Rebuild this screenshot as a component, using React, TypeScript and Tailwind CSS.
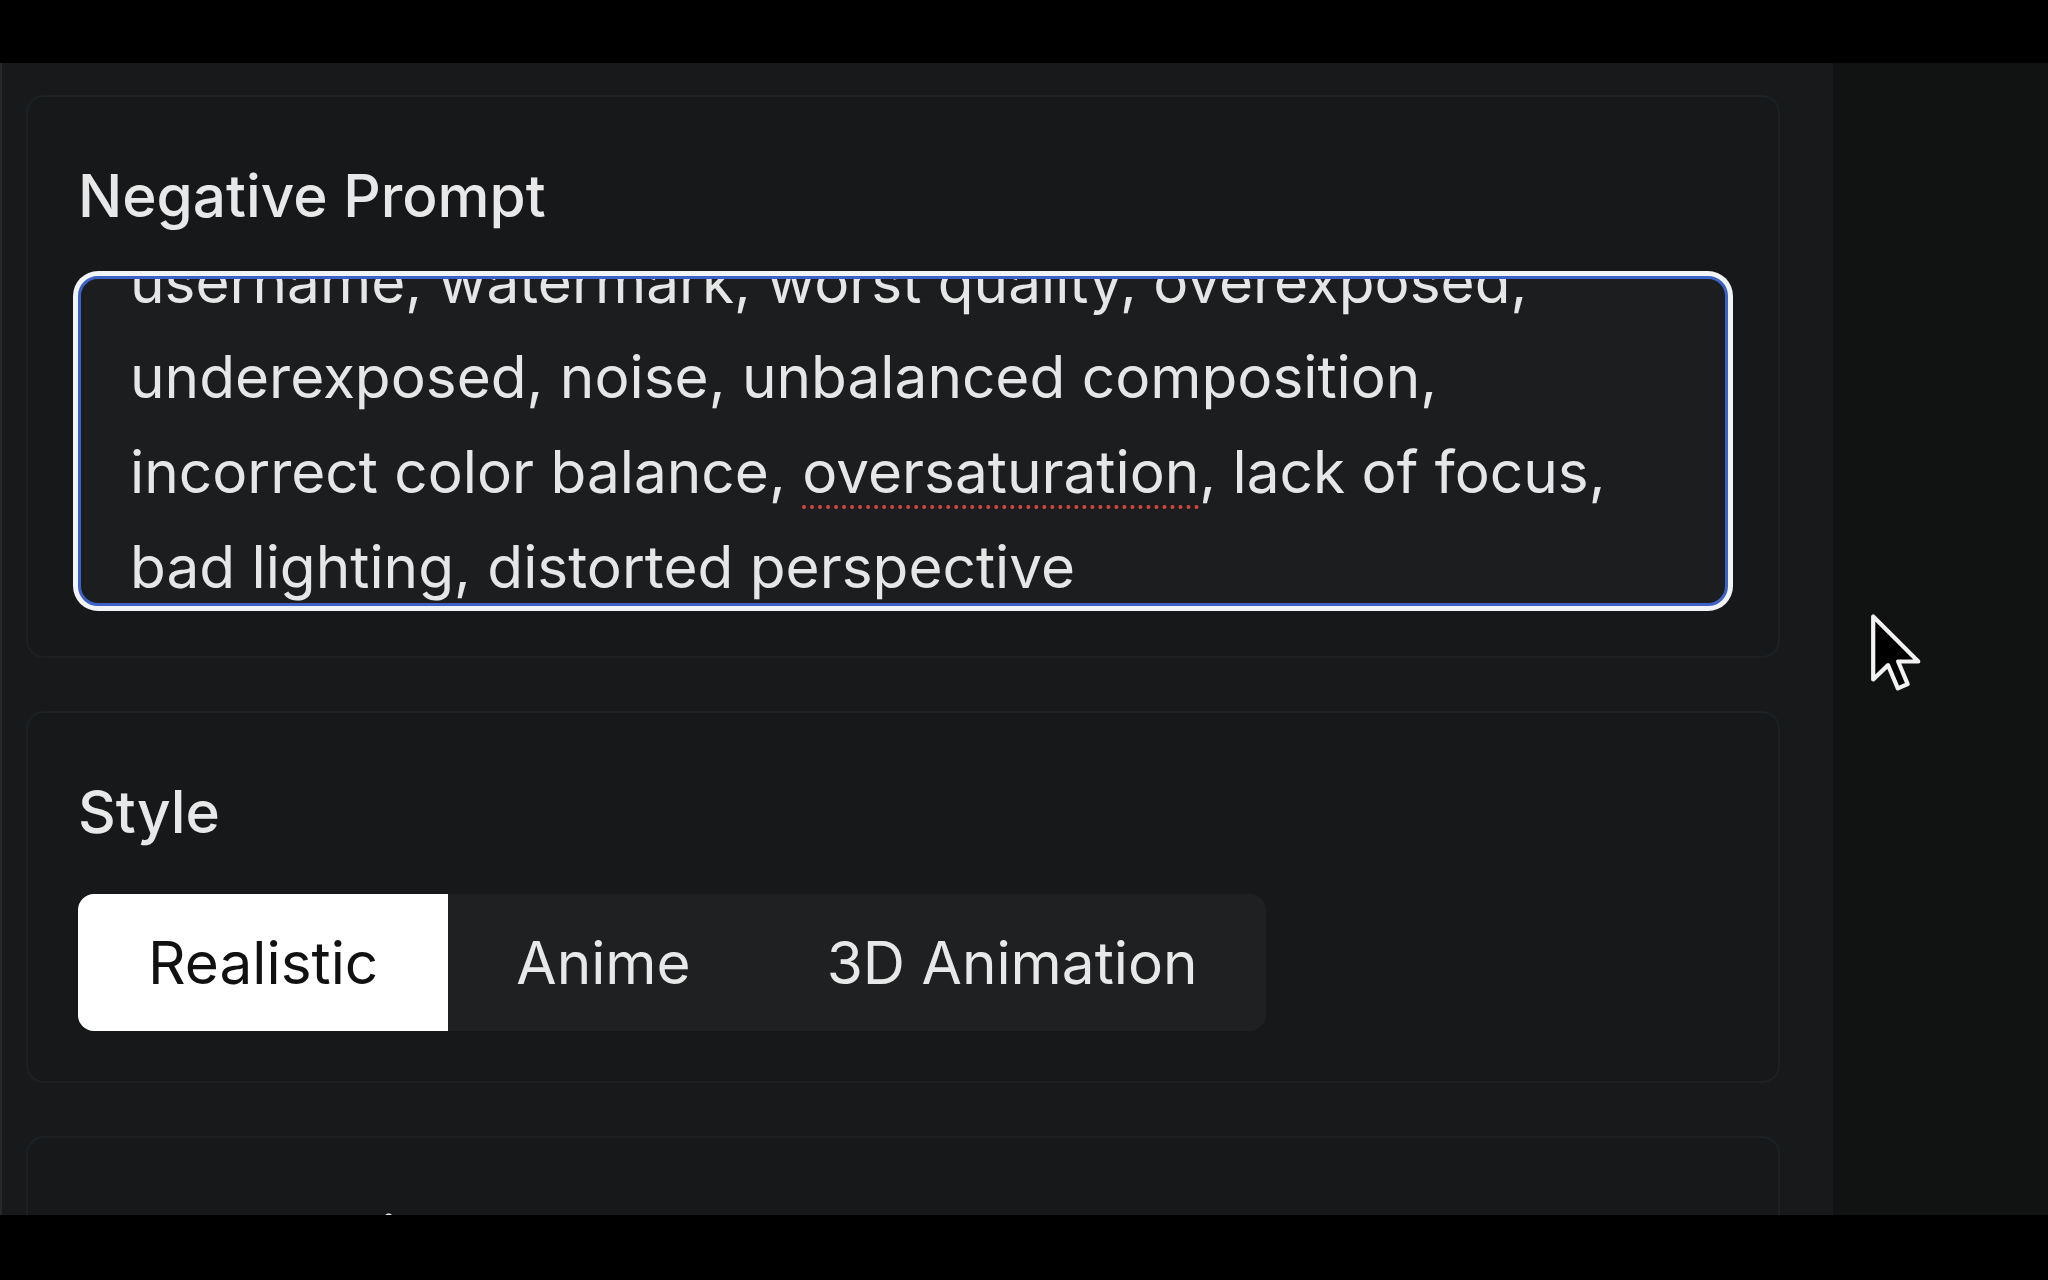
import React from 'react'

const lines = [
  'username, watermark, worst quality, overexposed,',
  'underexposed, noise, unbalanced composition,',
  null,
  'bad lighting, distorted perspective',
]

const styles = ['Realistic', 'Anime', '3D Animation']

const Cursor = () => (
  <svg width="56" height="90" viewBox="0 0 20 32" className="absolute left-[1869px] top-[549px]">
    <path
      d="M1.5 1.5 L1.5 24 L6.8 18.9 L10.3 27.2 L13.8 25.7 L10.4 17.6 L17.6 17.6 Z"
      fill="#000"
      stroke="#f2f2f2"
      strokeWidth="1.5"
      strokeLinejoin="round"
    />
  </svg>
)

const Card = ({ label, children }: { label: string, children?: React.ReactNode }) => (
  <div className="shrink-0 rounded-[18px] border-2 border-[#1d2123] bg-[#17181a] px-[50px] pt-[52px] pb-[50px]">
    <div className="text-[58.5px] leading-[94px] font-medium text-[#e8e8e8]">{label}</div>
    {children}
  </div>
)

export default function App() {
  const [active, setActive] = React.useState('Realistic')

  return (
    <div className="w-[2048px] h-[1280px] bg-black flex flex-col overflow-hidden font-[Inter,'Liberation_Sans',sans-serif]">
      <div className="h-[63px] shrink-0 bg-black" />
      <div className="h-[1152px] shrink-0 flex overflow-hidden relative">
        <div className="w-[1833px] shrink-0 bg-[#17191b] border-l-2 border-[#26292b] flex flex-col gap-[53px] pl-[24px] pr-[53px] pt-[32px]">
          <Card label="Negative Prompt">
            <div className="mt-[33px] h-[330px] rounded-[20px] border-[3px] border-[#3b62c4] shadow-[0_0_0_5px_#f1f3f7] bg-[#1b1d1f] overflow-hidden pl-[49px]">
              <div className="-mt-[45px] text-[58.5px] leading-[95px] text-[#e6e6e6] whitespace-nowrap">
                {lines.map((line, i) =>
                  line ? (
                    <div key={i}>{line}</div>
                  ) : (
                    <div key={i}>
                      incorrect color balance,{' '}
                      <span className="underline decoration-dotted decoration-[#d9443f] decoration-[4px] underline-offset-[12px]">oversaturation</span>
                      , lack of focus,
                    </div>
                  )
                )}
              </div>
            </div>
          </Card>
          <Card label="Style">
            <div className="mt-[35px] inline-flex h-[137px] rounded-[16px] bg-[#1e2022]">
              {styles.map(s => (
                <button
                  key={s}
                  onClick={() => setActive(s)}
                  className={
                    s === active
                      ? 'px-[70px] rounded-l-[16px] bg-white text-[#111] text-[58.5px]'
                      : 'px-[68px] text-[#e8e8e8] text-[58.5px]'
                  }
                >
                  {s}
                </button>
              ))}
            </div>
          </Card>
          <Card label="Aspect Ratio" />
        </div>
        <div className="flex-1 bg-[#101312]" />
        <Cursor />
      </div>
      <div className="flex-1 bg-black" />
    </div>
  )
}
